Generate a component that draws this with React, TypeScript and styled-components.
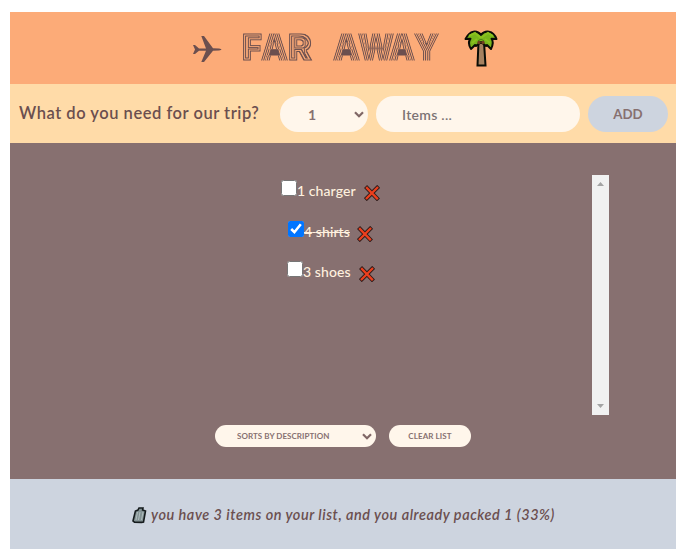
import React, { useState } from "react";
import styled, { createGlobalStyle } from "styled-components";

const font = `Lato, "Open Sans", sans-serif`;

const GlobalStyle = createGlobalStyle`
  * { box-sizing: border-box; }
  body { margin: 0; background: #fff; font-family: ${font}; color: #6b4f4f; }
  button, select, input { font-family: inherit; border: 0; outline: 0; }
`;

const Page = styled.div`
  width: 666px;
  height: 537px;
  margin: 12px 0 0 10px;
  display: grid;
  grid-template-rows: 72px 59px 336px 70px;
`;
const Header = styled.header`
  background: #fcab78;
  display: flex;
  align-items: flex-start;
  padding: 17px 0 0 182px;
`;
const Plane = styled.svg`
  width: 30px;
  height: 28px;
  margin-top: 6px;
`;
const Title = styled.svg`
  width: 202px;
  height: 26px;
  margin: 5px 0 0 20px;
  overflow: visible;
`;
const Palm = styled.svg`
  width: 34px;
  height: 38px;
  margin-left: 20px;
`;
const Form = styled.form`
  background: #ffdba8;
  display: flex;
  align-items: center;
  gap: 8px;
  padding: 1px 8px 0 9px;
`;
const Label = styled.h3`
  margin: 0 0 2px;
  width: 253px;
  font-size: 16.5px;
  font-weight: 600;
  letter-spacing: 0.53px;
  white-space: nowrap;
`;
const SelectWrap = styled.div<{ $w: number; $h: number }>`
  position: relative;
  width: ${(p) => p.$w}px;
  height: ${(p) => p.$h}px;
`;
const Select = styled.select<{ $small?: boolean }>`
  display: block;
  appearance: none;
  width: 100%;
  height: 100%;
  border-radius: 100px;
  background: #fff6eb;
  color: #877070;
  font-weight: 700;
  font-size: ${(p) => (p.$small ? "8px" : "14px")};
  letter-spacing: ${(p) => (p.$small ? "0.05px" : "0")};
  padding: 0 ${(p) => (p.$small ? "22px" : "28px")};
`;
const Chevron = styled.svg`
  position: absolute;
  right: 4px;
  top: calc(50% - 3px);
  width: 10px;
  height: 7px;
  pointer-events: none;
`;
const Input = styled.input`
  width: 204px;
  height: 36px;
  border-radius: 100px;
  background: #fff6eb;
  padding: 0 26px;
  font-size: 14px;
  font-weight: 600;
  letter-spacing: 0.3px;
  &::placeholder { color: #7c7375; opacity: 1; }
`;
const Button = styled.button<{ $small?: boolean }>`
  width: ${(p) => (p.$small ? 82 : 80)}px;
  height: ${(p) => (p.$small ? 22 : 36)}px;
  padding: 0;
  border-radius: 100px;
  background: ${(p) => (p.$small ? "#fff6eb" : "#cdd4df")};
  color: #877070;
  font-weight: 700;
  font-size: ${(p) => (p.$small ? 8 : 13.3)}px;
  letter-spacing: ${(p) => (p.$small ? 0.1 : 0)}px;
`;
const Main = styled.main`
  background: #877070;
  color: #fff1df;
  display: flex;
  flex-direction: column;
  padding-top: 32px;
`;
const ListBox = styled.div`
  width: 542px;
  height: 240px;
  margin-left: 57px;
  display: flex;
`;
const List = styled.ul`
  flex: 1;
  margin: 0;
  padding: 0;
  list-style: none;
  display: grid;
  grid-auto-rows: 40.5px;
  align-content: start;
`;
const Row = styled.li<{ $left: number }>`
  display: flex;
  align-items: flex-start;
  padding-left: ${(p) => p.$left}px;
`;
const Check = styled.input.attrs({ type: "checkbox" })`
  width: 16px;
  height: 16px;
  margin: 5px 0 0;
`;
const Name = styled.span<{ $packed: boolean; $w: number }>`
  width: ${(p) => p.$w}px;
  white-space: nowrap;
  font-size: 14px;
  font-weight: 500;
  line-height: 18px;
  margin-top: 7px;
  letter-spacing: 0.08px;
  text-decoration: ${(p) => (p.$packed ? "line-through" : "none")};
`;
const Remove = styled.button`
  background: none;
  padding: 0;
  width: 16px;
  height: 16px;
  margin: 10px 0 0 8px;
`;
const Track = styled.div`
  width: 17px;
  background: #f1f1f1;
  display: flex;
  flex-direction: column;
  justify-content: space-between;
  align-items: center;
  padding: 7px 0;
`;
const Arrow = styled.svg`
  width: 7px;
  height: 4px;
`;
const Actions = styled.div`
  display: flex;
  gap: 13px;
  margin: 10px 0 0 205px;
`;
const Footer = styled.footer`
  background: #cdd4df;
  display: flex;
  align-items: center;
  padding: 2px 0 0 122px;
  gap: 4px;
`;
const Stats = styled.em`
  margin-bottom: 2px;
  font-size: 14.5px;
  font-weight: 600;
  letter-spacing: 0.53px;
  white-space: nowrap;
`;

const letters = [
  { ch: "F", x: 0, w: 20, filter: "inline" },
  { ch: "A", x: 19, w: 27, filter: "stripe" },
  { ch: "R", x: 46, w: 24, filter: "inline" },
  { ch: "A", x: 91, w: 27, filter: "stripe" },
  { ch: "W", x: 116, w: 36, filter: "stripe" },
  { ch: "A", x: 147, w: 26, filter: "stripe" },
  { ch: "Y", x: 172, w: 25, filter: "stripe" },
];

/* Nested erosions, alternately removed and restored, leave parallel lines. */
const Contours = ({ id, vertical }: { id: string; vertical: number }) => (
  <filter id={id} x="-10%" y="-10%" width="120%" height="120%" colorInterpolationFilters="sRGB">
    {[1, 2, 3, 4, 5, 6].map((r) => (
      <feMorphology key={r} in="SourceGraphic" operator="erode" radius={`${r} ${r * vertical}`} result={`e${r}`} />
    ))}
    <feComposite in="SourceGraphic" in2="e1" operator="arithmetic" k2="1" k3="-1" result="outer" />
    <feComposite in="e2" in2="e3" operator="arithmetic" k2="1" k3="-1" result="middle" />
    <feComposite in="e4" in2="e5" operator="arithmetic" k2="1" k3="-1" result="inner" />
    <feMerge>
      <feMergeNode in="outer" />
      <feMergeNode in="middle" />
      <feMergeNode in="inner" />
      <feMergeNode in="e6" />
    </feMerge>
  </filter>
);

const Logo = () => (
  <Title viewBox="0 0 202 26" role="img" aria-label="FAR AWAY">
    <defs>
      <Contours id="inline" vertical={1} />
      <Contours id="stripe" vertical={0.001} />
    </defs>
    <g fontFamily="Inter, Lato, sans-serif" fontWeight={900} fontSize={36} fill="#6b4f4f" stroke="#6b4f4f" strokeWidth={0.9}>
      {letters.map((l, i) => (
        <text key={i} x={l.x} y={26} textLength={l.w} lengthAdjust="spacingAndGlyphs" filter={`url(#${l.filter})`}>
          {l.ch}
        </text>
      ))}
    </g>
  </Title>
);

const Caret = () => (
  <Chevron viewBox="0 0 10 7">
    <path d="M1 1.2 5 5.2 9 1.2" fill="none" stroke="#806766" strokeWidth="2.2" />
  </Chevron>
);

const Cross = () => (
  <svg width="16" height="16" viewBox="0 0 16 16">
    <path d="m3 3 10 10.4M13.2 2.8 2.8 13.2" stroke="#301b19" strokeWidth="4.2" strokeLinecap="square" />
    <path d="m3 3 10 10.4M13.2 2.8 2.8 13.2" stroke="#ed3f1d" strokeWidth="2.3" strokeLinecap="square" />
  </svg>
);

const initial = [
  { qty: 1, name: "charger", packed: false, left: 214, w: 59 },
  { qty: 4, name: "shirts", packed: true, left: 221, w: 45 },
  { qty: 3, name: "shoes", packed: false, left: 220, w: 48 },
];

export default function App() {
  const [items, setItems] = useState(initial);
  const toggle = (n: string) =>
    setItems((list) => list.map((i) => (i.name === n ? { ...i, packed: !i.packed } : i)));
  return (
    <>
      <GlobalStyle />
      <Page>
        <Header>
          <Plane viewBox="0 0 30 28">
            <path d="M1 10h2l4 3.4h7L9.3 1H12l9 12.2 6 .3q2.5.4 2.5 1t-2.5 1l-6 .3-9 11.3H9.3L14 15.7H7L3 19H1l2-4.5z" fill="#6b4f4f" />
          </Plane>
          <Logo />
          <Palm viewBox="0 0 34 38">
            <path d="m14.5 13-1 23.5h8L20 13" fill="#a78260" stroke="#0b0d06" strokeWidth="2" />
            <path d="M17 6C13 1 6 1 1.5 10l5-.3C4 13 5 17 7 20l4-4 1 1 5-4 5 4 1-1 4 4c2-4 3-7 .5-10.3l5 .3C29 1 21 1 17 6Z" fill="#79b51c" stroke="#0b0d06" strokeWidth="2" strokeLinejoin="round" />
            <path d="m5 7 6-3 6 5 7-5 5 3M8 14l5-4m8 0 5 4" fill="none" stroke="#8bc11f" strokeWidth="2" />
            <path d="M14 12l3-2 3 2" fill="none" stroke="#477c13" strokeWidth="1" />
            <circle cx="15" cy="13.5" r="1.7" fill="#703f20" />
            <circle cx="19" cy="13.5" r="1.7" fill="#703f20" />
          </Palm>
        </Header>
        <Form onSubmit={(e) => e.preventDefault()}>
          <Label>What do you need for our trip?</Label>
          <SelectWrap $w={88} $h={36}>
            <Select><option>1</option><option>2</option></Select>
            <Caret />
          </SelectWrap>
          <Input placeholder="Items ..." />
          <Button>ADD</Button>
        </Form>
        <Main>
          <ListBox>
            <List>
              {items.map((i) => (
                <Row key={i.name} $left={i.left}>
                  <Check checked={i.packed} onChange={() => toggle(i.name)} />
                  <Name $packed={i.packed} $w={i.w}>{i.qty} {i.name}</Name>
                  <Remove aria-label="Remove"><Cross /></Remove>
                </Row>
              ))}
            </List>
            <Track>
              <Arrow viewBox="0 0 7 4"><path d="M0 4 3.5 0 7 4z" fill="#a3a3a3" /></Arrow>
              <Arrow viewBox="0 0 7 4"><path d="M0 0h7L3.5 4z" fill="#a3a3a3" /></Arrow>
            </Track>
          </ListBox>
          <Actions>
            <SelectWrap $w={161} $h={22}>
              <Select $small><option>SORTS BY DESCRIPTION</option></Select>
              <Caret />
            </SelectWrap>
            <Button $small>CLEAR LIST</Button>
          </Actions>
        </Main>
        <Footer>
          <svg width="15" height="17" viewBox="0 0 15 17">
            <path d="M6 3 7 1h4l-.4 2 2.9 1-2 11-2 .4-7-.2L1 14 3.4 4z" fill="#839294" stroke="#151b1d" strokeWidth="1.6" />
            <path d="M5.5 5 4 13m4-8-1.5 8M11 5 9.5 13" stroke="#b0bdbe" strokeWidth="1" />
          </svg>
          <Stats>you have 3 items on your list, and you already packed 1 (33%)</Stats>
        </Footer>
      </Page>
    </>
  );
}
